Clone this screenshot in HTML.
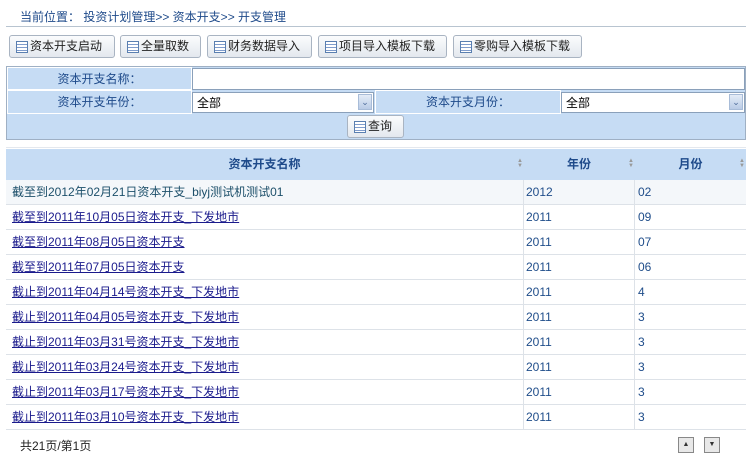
<html><head><style>
body{margin:0;width:750px;height:464px;background:#fff;font-family:"Liberation Sans","Noto Sans CJK SC",sans-serif;font-size:12px;color:#1c3f6e;position:relative;overflow:hidden}
.a{position:absolute}
.btn{position:absolute;top:35px;height:21px;border:1px solid #a9b4c2;border-radius:3px;background:linear-gradient(#fbfcfd,#e3e8ee);line-height:21px;color:#222;font-size:12px;padding-left:20px;box-sizing:content-box}
.ic{position:absolute;left:6px;top:5px;width:10px;height:10px;border:1px solid #5a7fb0;background:repeating-linear-gradient(#fff 0 2px,#7f9ccc 2px 3px)}
.lb{position:absolute;background:#c6dcf4;color:#1e4a8a;text-align:center;line-height:22px;border:1px solid #fff;box-sizing:border-box}
.in{position:absolute;background:#fff;border:1px solid #8aa0ba;box-sizing:border-box;padding-left:4px;line-height:20px;color:#000}
.dd{position:absolute;right:1px;top:1px;width:14px;height:16px;background:linear-gradient(#e4ecf7,#b9cbe6);border:1px solid #a8bcd8;box-sizing:border-box;font-size:9px;text-align:center;line-height:14px;color:#4d6a99}
.row{position:absolute;left:6px;width:740px;height:25px;border-bottom:1px solid #dde2e8;box-sizing:border-box;line-height:25px}
.row span{position:absolute}
.n{left:6px;color:#1a1a8c;text-decoration:underline}
.y{left:520px;color:#1f4d8a}
.m{left:632px;color:#1f4d8a}
.vl{position:absolute;top:180px;width:1px;height:250px;background:#dde2e8}
.s{position:absolute;top:10px;width:6px;height:11px;font-size:6px;line-height:5px;color:#999;font-weight:normal}
</style></head><body>
<div class="a" style="left:20px;top:8px;color:#1e4a8a">当前位置： 投资计划管理&gt;&gt; 资本开支&gt;&gt; 开支管理</div>
<div class="a" style="left:6px;top:26px;width:740px;height:1px;background:#b8c4d0"></div>
<div class="btn" style="left:9px;width:84px"><i class="ic"></i>资本开支启动</div>
<div class="btn" style="left:120px;width:59px"><i class="ic"></i>全量取数</div>
<div class="btn" style="left:207px;width:83px"><i class="ic"></i>财务数据导入</div>
<div class="btn" style="left:318px;width:107px"><i class="ic"></i>项目导入模板下载</div>
<div class="btn" style="left:453px;width:107px"><i class="ic"></i>零购导入模板下载</div>
<div class="a" style="left:6px;top:66px;width:740px;height:74px;background:#c6dcf4;border:1px solid #9fb0c4;box-sizing:border-box"></div>
<div class="lb" style="left:7px;top:67px;width:185px;height:23px">资本开支名称：</div>
<div class="in" style="left:192px;top:68px;width:553px;height:22px"></div>
<div class="lb" style="left:7px;top:90px;width:185px;height:24px">资本开支年份：</div>
<div class="in" style="left:192px;top:92px;width:182px;height:21px">全部<div class="dd">&#8964;</div></div>
<div class="lb" style="left:375px;top:90px;width:186px;height:24px">资本开支月份：</div>
<div class="in" style="left:561px;top:92px;width:184px;height:21px">全部<div class="dd">&#8964;</div></div>
<div class="btn" style="left:347px;top:115px;width:35px"><i class="ic"></i>查询</div>
<div class="a" style="left:6px;top:147px;width:740px;height:1px;background:#e4e8ee"></div>
<div class="a" style="left:6px;top:149px;width:740px;height:31px;background:#c6dcf4;font-weight:bold;line-height:31px;color:#1e4a8a">
<span class="a" style="left:0;width:517px;text-align:center">资本开支名称</span><span class="s" style="left:511px">▲<br>▼</span>
<span class="a" style="left:518px;width:110px;text-align:center">年份</span><span class="s" style="left:622px">▲<br>▼</span>
<span class="a" style="left:629px;width:111px;text-align:center">月份</span><span class="s" style="left:733px">▲<br>▼</span>
</div>
<div class="row" style="top:180px;background:#f4f7fa"><span class="n" style="color:#1c4f6a;text-decoration:none">截至到2012年02月21日资本开支_biyj测试机测试01</span><span class="y">2012</span><span class="m">02</span></div>
<div class="row" style="top:205px"><span class="n">截至到2011年10月05日资本开支_下发地市</span><span class="y">2011</span><span class="m">09</span></div>
<div class="row" style="top:230px"><span class="n">截至到2011年08月05日资本开支</span><span class="y">2011</span><span class="m">07</span></div>
<div class="row" style="top:255px"><span class="n">截至到2011年07月05日资本开支</span><span class="y">2011</span><span class="m">06</span></div>
<div class="row" style="top:280px"><span class="n">截止到2011年04月14号资本开支_下发地市</span><span class="y">2011</span><span class="m">4</span></div>
<div class="row" style="top:305px"><span class="n">截止到2011年04月05号资本开支_下发地市</span><span class="y">2011</span><span class="m">3</span></div>
<div class="row" style="top:330px"><span class="n">截止到2011年03月31号资本开支_下发地市</span><span class="y">2011</span><span class="m">3</span></div>
<div class="row" style="top:355px"><span class="n">截止到2011年03月24号资本开支_下发地市</span><span class="y">2011</span><span class="m">3</span></div>
<div class="row" style="top:380px"><span class="n">截止到2011年03月17号资本开支_下发地市</span><span class="y">2011</span><span class="m">3</span></div>
<div class="row" style="top:405px"><span class="n">截止到2011年03月10号资本开支_下发地市</span><span class="y">2011</span><span class="m">3</span></div>
<div class="vl" style="left:523px"></div><div class="vl" style="left:634px"></div>
<div class="a" style="left:20px;top:437px;color:#222">共21页/第1页</div>
<div class="a" style="left:678px;top:437px;width:14px;height:14px;border:1px solid #888;background:#e8e8e8;font-size:7px;text-align:center;line-height:14px;color:#333">&#9650;</div>
<div class="a" style="left:704px;top:437px;width:14px;height:14px;border:1px solid #888;background:#e8e8e8;font-size:7px;text-align:center;line-height:14px;color:#333">&#9660;</div>
</body></html>
